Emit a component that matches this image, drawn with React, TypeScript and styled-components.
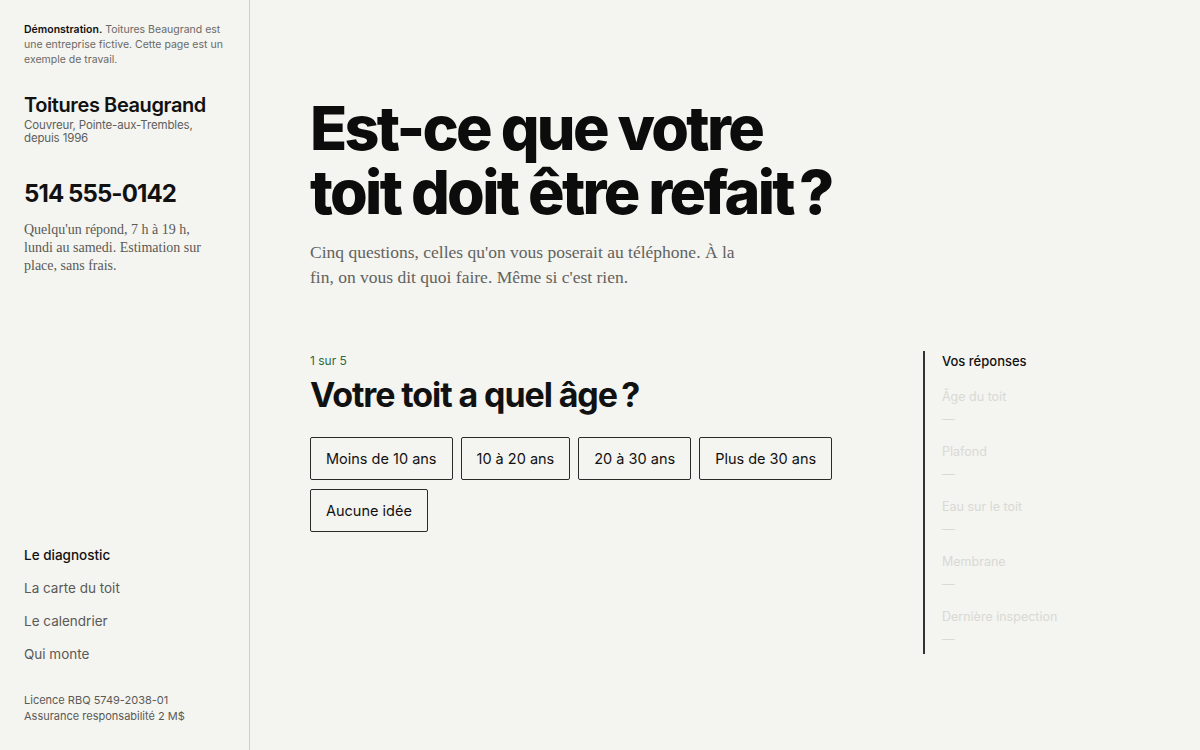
import styled, { createGlobalStyle } from 'styled-components';

const GlobalStyle = createGlobalStyle`
  html, body {
    margin: 0;
    padding: 0;
    background: #f4f4f0;
    color: #111;
    font-family: Inter, 'Liberation Sans', sans-serif;
  }
  * { box-sizing: border-box; }
`;

const answers = ['Âge du toit', 'Plafond', 'Eau sur le toit', 'Membrane', 'Dernière inspection'];
const choices = ['Moins de 10 ans', '10 à 20 ans', '20 à 30 ans', 'Plus de 30 ans', 'Aucune idée'];
const links = ['Le diagnostic', 'La carte du toit', 'Le calendrier', 'Qui monte'];

function App() {
  return (
    <>
      <GlobalStyle />
      <Page>
        <Sidebar>
          <div>
            <Notice>
              <b>Démonstration.</b> Toitures Beaugrand est une entreprise fictive. Cette page est un exemple de
              travail.
            </Notice>
            <Brand>Toitures Beaugrand</Brand>
            <BrandSub>
              Couvreur, Pointe-aux-Trembles,
              <br />
              depuis 1996
            </BrandSub>
            <Phone>514 555-0142</Phone>
            <Hours>Quelqu'un répond, 7 h à 19 h, lundi au samedi. Estimation sur place, sans frais.</Hours>
          </div>
          <div>
            <Nav>
              {links.map((l, i) => (
                <NavLink key={l} active={i === 0}>
                  {l}
                </NavLink>
              ))}
            </Nav>
            <Legal>
              Licence RBQ 5749-2038-01
              <br />
              Assurance responsabilité 2 M$
            </Legal>
          </div>
        </Sidebar>
        <Main>
          <Title>
            <TitleLine>Est-ce que votre</TitleLine>
            <TitleLine>toit doit être refait&#8201;?</TitleLine>
          </Title>
          <Lead>
            Cinq questions, celles qu'on vous poserait au téléphone. À la fin, on vous dit quoi faire. Même si
            c'est rien.
          </Lead>
          <Quiz>
            <Question>
              <Step>1 sur 5</Step>
              <QuestionTitle>Votre toit a quel âge&#8201;?</QuestionTitle>
              <Choices>
                {choices.map((c) => (
                  <Choice key={c}>{c}</Choice>
                ))}
              </Choices>
            </Question>
            <Answers>
              <AnswersTitle>Vos réponses</AnswersTitle>
              {answers.map((a) => (
                <AnswerItem key={a}>
                  <AnswerLabel>{a}</AnswerLabel>
                  <AnswerValue>—</AnswerValue>
                </AnswerItem>
              ))}
            </Answers>
          </Quiz>
        </Main>
      </Page>
    </>
  );
}

const Page = styled.div`
  display: flex;
  min-height: 750px;
`;

const Sidebar = styled.aside`
  width: 250px;
  flex-shrink: 0;
  height: 750px;
  border-right: 1px solid #cfcfca;
  padding: 22px 20px 26px 24px;
  display: flex;
  flex-direction: column;
  justify-content: space-between;
`;

const Notice = styled.p`
  margin: 0;
  font-size: 10.5px;
  line-height: 15px;
  color: #6a6a66;
  b {
    color: #111;
    font-weight: 600;
  }
`;

const Brand = styled.div`
  margin-top: 25px;
  font-size: 20px;
  font-weight: 600;
  letter-spacing: -0.4px;
  line-height: 26px;
`;

const BrandSub = styled.div`
  font-size: 11.5px;
  line-height: 13px;
  letter-spacing: -0.15px;
  color: #5f5f5b;
  margin-top: 1px;
`;

const Phone = styled.div`
  margin-top: 34px;
  font-size: 24px;
  font-weight: 700;
  letter-spacing: -0.9px;
  line-height: 30px;
`;

const Hours = styled.p`
  margin: 12px 0 0;
  font-family: 'Liberation Serif', serif;
  font-size: 14px;
  line-height: 18px;
  color: #5a5a56;
  width: 192px;
`;

const Nav = styled.nav`
  display: flex;
  flex-direction: column;
  gap: 13px;
`;

const NavLink = styled.a<{ active?: boolean }>`
  font-size: 13.5px;
  line-height: 20px;
  color: ${({ active }) => (active ? '#111' : '#5a5a56')};
  font-weight: ${({ active }) => (active ? 500 : 400)};
  text-decoration: none;
`;

const Legal = styled.div`
  margin-top: 28px;
  font-size: 11px;
  line-height: 16px;
  color: #5a5a56;
`;

const Main = styled.main`
  flex: 1;
  padding: 96px 0 0 60px;
`;

const Title = styled.h1`
  margin: 0;
  font-size: 61px;
  font-weight: 800;
  letter-spacing: -2.7px;
  color: #0c0c0c;
`;

const TitleLine = styled.span`
  display: block;
  line-height: 64px;
  height: 64px;
`;

const Lead = styled.p`
  margin: 16px 0 0;
  width: 440px;
  font-family: 'Liberation Serif', serif;
  font-size: 17.5px;
  line-height: 25px;
  color: #62625e;
`;

const Quiz = styled.section`
  margin-top: 61px;
  display: flex;
  align-items: flex-start;
`;

const Question = styled.div`
  width: 613px;
  padding-top: 2px;
`;

const Step = styled.div`
  font-size: 12px;
  line-height: 16px;
  color: #2d6a45;
`;

const QuestionTitle = styled.h2`
  margin: 6px 0 0;
  font-size: 34px;
  line-height: 40px;
  font-weight: 700;
  letter-spacing: -1.1px;
`;

const Choices = styled.div`
  margin-top: 22px;
  display: flex;
  flex-wrap: wrap;
  gap: 9px 8px;
  width: 540px;
`;

const Choice = styled.button`
  height: 43px;
  padding: 0 15px;
  background: transparent;
  border: 1px solid #2a2a28;
  border-radius: 2px;
  font-family: Inter, 'Liberation Sans', sans-serif;
  font-size: 14.5px;
  color: #111;
  cursor: pointer;
`;

const Answers = styled.aside`
  border-left: 2px solid #333;
  padding: 0 0 6px 17px;
  width: 220px;
`;

const AnswersTitle = styled.div`
  font-size: 13px;
  line-height: 20px;
  font-weight: 500;
  margin-bottom: 16px;
`;

const AnswerItem = styled.div`
  display: flex;
  flex-direction: column;
  gap: 3px;
  & + & {
    margin-top: 14px;
  }
`;

const AnswerLabel = styled.div`
  font-size: 12.5px;
  line-height: 19px;
  color: #d9d9d5;
`;

const AnswerValue = styled.div`
  font-size: 12.5px;
  line-height: 19px;
  color: #d9d9d5;
`;

export default App;
